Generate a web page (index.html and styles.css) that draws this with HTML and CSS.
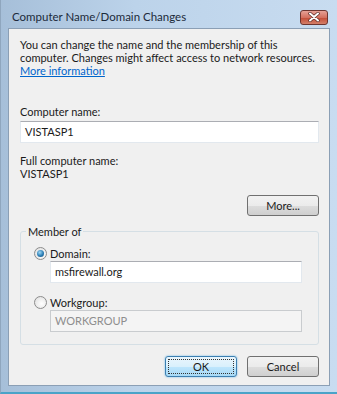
FILE: index.html
```html
<!DOCTYPE html>
<html lang="en">
<head>
  <meta charset="UTF-8">
  <title>Computer Name/Domain Changes</title>
  <link rel="stylesheet" href="styles.css">
</head>
<body>

<div class="window">
  <div class="titlebar">
    <span class="title">Computer Name/Domain Changes</span>
    <span class="close-btn">
      <svg width="12" height="10" viewBox="0 0 12 10">
        <path d="M2 1.5 L10 8.5 M10 1.5 L2 8.5" stroke="#5a2a26" stroke-width="3.4" stroke-linecap="round"/>
        <path d="M2 1.5 L10 8.5 M10 1.5 L2 8.5" stroke="#ffffff" stroke-width="2" stroke-linecap="round"/>
      </svg>
    </span>
  </div>

  <div class="client">
    <p class="intro">
      You can change the name and the membership of this<br>
      computer. Changes might affect access to network resources.<br>
      <a href="#" class="link">More information</a>
    </p>

    <div class="form-group">
      <label class="label" for="compname">Computer name:</label>
      <div class="textbox" id="compname">VISTASP1</div>
    </div>

    <div class="full-name">
      <div>Full computer name:</div>
      <div>VISTASP1</div>
    </div>

    <div class="more-row">
      <span class="btn">More...</span>
    </div>

    <fieldset class="group">
      <legend class="group-title">Member of</legend>
      <div class="radio-row">
        <span class="radio checked"></span>
        <span>Domain:</span>
      </div>
      <div class="textbox indent">msfirewall.org</div>
      <div class="radio-row second">
        <span class="radio"></span>
        <span>Workgroup:</span>
      </div>
      <div class="textbox indent disabled">WORKGROUP</div>
    </fieldset>

    <div class="actions">
      <span class="btn default"><span class="focus">OK</span></span>
      <span class="btn">Cancel</span>
    </div>
  </div>
</div>

</body>
</html>
```

FILE: styles.css
```css
body {
  margin: 0;
  font-family: Lato, "Open Sans", sans-serif;
  font-size: 11px;
  color: #1a1a1a;
  background: #ffffff;
}
.window {
  width: 337px;
  height: 394px;
  box-sizing: border-box;
  display: flex;
  flex-direction: column;
  padding: 0 7px 0 7px;
  background: linear-gradient(to right, #a6bfd9, #bcd3ea 40%, #c8dcf0);
  border-left: 1px solid #8fa6be;
  border-bottom: 2px solid #4aa3c8;
}
.titlebar {
  height: 28px;
  display: flex;
  align-items: center;
  justify-content: space-between;
  padding: 0 2px 0 4px;
}
.title {
  font-size: 11.5px;
  color: #1c2a3a;
  padding-top: 5px;
}
.close-btn {
  width: 28px;
  height: 15px;
  margin-top: 6px;
  border: 1px solid #6d3530;
  border-radius: 3px;
  background: linear-gradient(to bottom, #e6a196, #d4705f 50%, #c24a35 51%, #d4806a);
  display: flex;
  align-items: center;
  justify-content: center;
  box-sizing: border-box;
}
.client {
  flex: 1;
  margin-bottom: 6px;
  background: #f0f0f0;
  border: 1px solid #8b9fb5;
  padding: 0 10px 0 11px;
  display: flex;
  flex-direction: column;
}
.intro {
  margin: 9px 0 0 0;
  line-height: 13px;
  white-space: nowrap;
}
.link {
  color: #0066cc;
}
.form-group {
  margin-top: 28px;
}
.label {
  display: block;
  line-height: 13px;
  margin-bottom: 3px;
}
.textbox {
  height: 22px;
  box-sizing: border-box;
  background: #ffffff;
  border: 1px solid #e2e8ee;
  border-top-color: #abadb3;
  padding: 0 4px;
  line-height: 20px;
}
.textbox.indent {
  margin-left: 29px;
  margin-right: 16px;
}
.textbox.disabled {
  background: #f4f4f4;
  border-color: #c9cccf;
  color: #8e8e8e;
}
.full-name {
  margin-top: 11px;
  line-height: 13px;
}
.more-row {
  display: flex;
  justify-content: flex-end;
  margin-top: 15px;
}
.btn {
  width: 72px;
  height: 21px;
  box-sizing: border-box;
  border: 1px solid #707070;
  border-radius: 3px;
  background: linear-gradient(to bottom, #f2f2f2, #ebebeb 50%, #dddddd 51%, #cfcfcf);
  display: flex;
  align-items: center;
  justify-content: center;
}
.group {
  margin: 9px 0 0 0;
  padding: 8px 0 12px 0;
  border: 1px solid #d5dfe5;
  border-radius: 3px;
}
.group-title {
  margin-left: 5px;
  padding: 0 2px;
  line-height: 13px;
}
.radio-row {
  display: flex;
  align-items: center;
  gap: 3px;
  margin-left: 13px;
  height: 14px;
  margin-bottom: 1px;
}
.radio-row.second {
  margin-top: 12px;
}
.radio {
  width: 11px;
  height: 11px;
  border: 1px solid #8c8c8c;
  border-radius: 50%;
  background: radial-gradient(circle at 60% 60%, #ffffff, #dcdcdc);
  position: relative;
}
.radio.checked::after {
  content: "";
  position: absolute;
  left: 2px;
  top: 2px;
  width: 7px;
  height: 7px;
  border-radius: 50%;
  background: radial-gradient(circle at 40% 35%, #9fd8f5, #2a7db5 55%, #164b72);
}
.actions {
  display: flex;
  justify-content: flex-end;
  gap: 10px;
  margin-top: 11px;
}
.btn.default {
  border-color: #3c7fb1;
  background: linear-gradient(to bottom, #eaf6fd, #d9f0fc 50%, #bee6fd 51%, #a7d9f5);
  box-shadow: 0 0 2px #5fb3e6;
}
.focus {
  border: 1px dotted #333;
  width: 64px;
  height: 13px;
  display: flex;
  align-items: center;
  justify-content: center;
}
```
